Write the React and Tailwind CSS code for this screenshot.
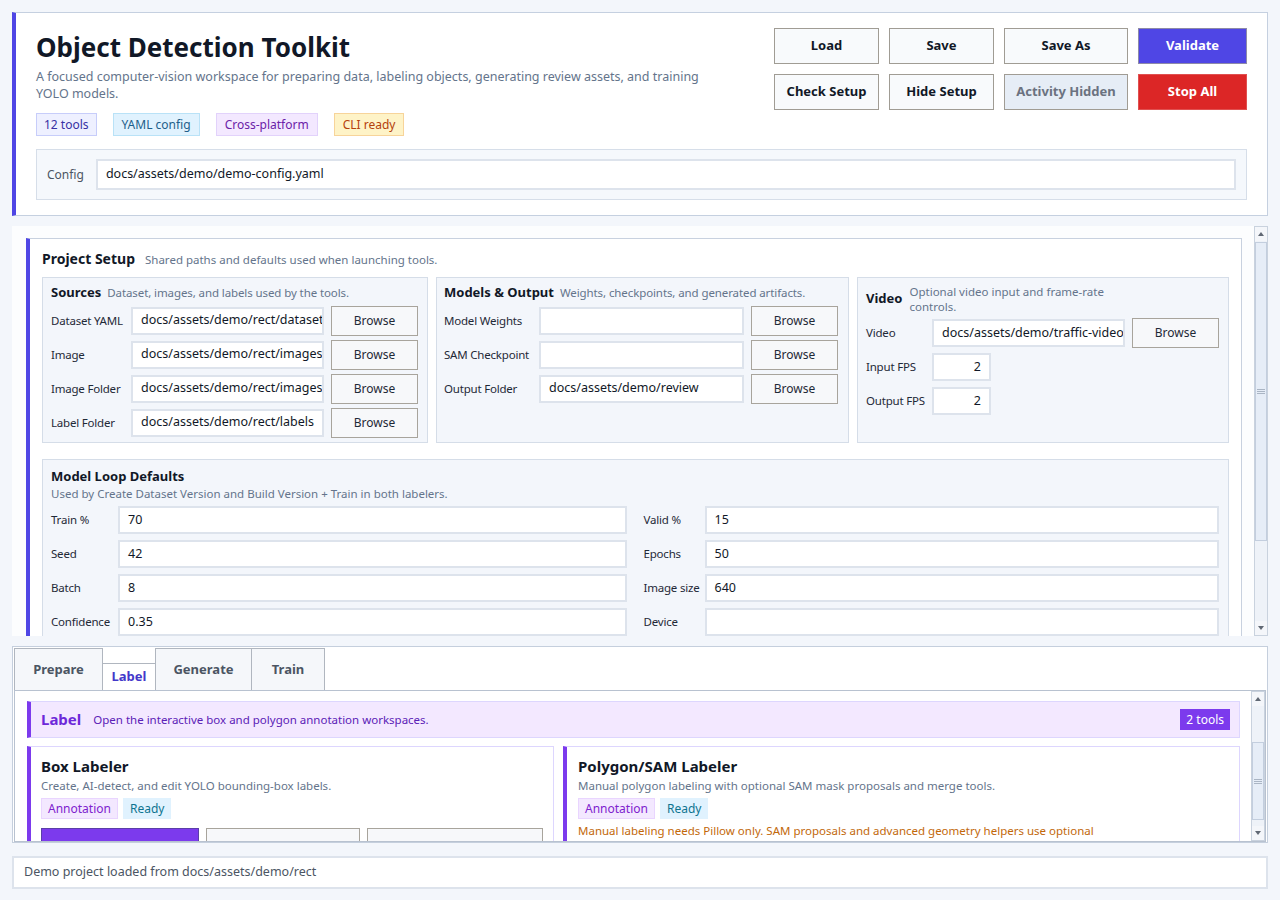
const font = { fontFamily: '"Noto Sans", "Open Sans", sans-serif' };

function Badge({ className, children }) {
  return (
    <span className={`inline-flex items-center border text-[12px] ${className}`}>
      {children}
    </span>
  );
}

function Btn({ className = "", children }) {
  return (
    <button
      type="button"
      className={`flex items-center justify-center border text-[13px] font-bold ${className}`}
    >
      {children}
    </button>
  );
}

function Field({ value = "", className = "", right = false }) {
  return (
    <div
      className={`flex h-[28px] items-center overflow-hidden whitespace-nowrap border-2 border-[#dde3ec] bg-white px-[8px] text-[12.5px] text-[#111827] ${
        right ? "justify-end" : ""
      } ${className}`}
    >
      {value}
    </div>
  );
}

function Browse() {
  return (
    <button
      type="button"
      className="flex h-[30px] w-[87px] shrink-0 items-center justify-center border border-[#a8a49c] bg-[#f7f8fa] text-[12px] text-[#1f2937]"
    >
      Browse
    </button>
  );
}

function Label({ w, children }) {
  return (
    <span className="shrink-0 whitespace-nowrap text-[11.5px] tracking-[-0.2px] text-[#1f2937]" style={{ width: w }}>
      {children}
    </span>
  );
}

function Scrollbar({ thumbTop, thumbH }) {
  return (
    <div className="flex w-[14px] shrink-0 flex-col border border-[#c9d2de] bg-[#eef2f8]">
      <div className="flex h-[14px] items-center justify-center bg-[#f4f6fa]">
        <div className="h-0 w-0 border-x-[3px] border-b-[4px] border-x-transparent border-b-[#606874]" />
      </div>
      <div className="relative flex-1">
        <div
          className="absolute left-0 right-0 flex flex-col items-center justify-center gap-[1px] border border-[#c3cede] bg-[#e6edf7]"
          style={{ top: thumbTop, height: thumbH }}
        >
          <div className="h-px w-[8px] bg-[#aab5c4]" />
          <div className="h-px w-[8px] bg-[#aab5c4]" />
          <div className="h-px w-[8px] bg-[#aab5c4]" />
        </div>
      </div>
      <div className="flex h-[14px] items-center justify-center bg-[#f4f6fa]">
        <div className="h-0 w-0 border-x-[3px] border-t-[4px] border-x-transparent border-t-[#606874]" />
      </div>
    </div>
  );
}

function LoopRow({ label, labelW, value }) {
  return (
    <div className="flex items-center">
      <Label w={labelW}>{label}</Label>
      <Field value={value} className="flex-1" />
    </div>
  );
}

export default function App() {
  return (
    <div className="flex h-[900px] flex-col bg-[#f3f6fb] p-3" style={font}>
      {/* header */}
      <header className="flex h-[204px] shrink-0 flex-col border border-l-4 border-[#c5d0e0] border-l-[#4f46e5] bg-white pl-5 pr-5 pt-[15px]">
        <div className="flex">
          <div className="flex-1">
            <h1 className="mt-[3px] text-[26px] font-bold leading-[32px] text-[#111827]">Object Detection Toolkit</h1>
            <p className="mt-[5px] w-[690px] text-[12.5px] leading-[17px] text-[#64748b]">
              A focused computer-vision workspace for preparing data, labeling objects, generating review assets, and training
              YOLO models.
            </p>
            <div className="mt-[11px] flex gap-4">
              <Badge className="h-[23px] border-[#c7cdfa] bg-[#eef0ff] px-[7px] text-[#3730a3]">12 tools</Badge>
              <Badge className="h-[23px] border-[#b9e2f7] bg-[#e0f2fe] px-[8px] text-[#1e5f8a]">YAML config</Badge>
              <Badge className="h-[23px] border-[#e2d2fb] bg-[#f3e8ff] px-[8px] text-[#6b21a8]">Cross-platform</Badge>
              <Badge className="h-[23px] border-[#f7d49a] bg-[#fef3c7] px-[8px] text-[#b4410c]">CLI ready</Badge>
            </div>
          </div>
          <div className="grid grid-cols-[105px_105px_124px_109px] grid-rows-[36px_36px] gap-[10px]">
            <Btn className="border-[#a09c94] bg-[#f8fafc] text-[#111827]">Load</Btn>
            <Btn className="border-[#a09c94] bg-[#f8fafc] text-[#111827]">Save</Btn>
            <Btn className="border-[#a09c94] bg-[#f8fafc] text-[#111827]">Save As</Btn>
            <Btn className="border-[#8d8aa8] bg-[#4f46e5] text-white">Validate</Btn>
            <Btn className="border-[#a09c94] bg-[#f8fafc] text-[#111827]">Check Setup</Btn>
            <Btn className="border-[#a09c94] bg-[#f8fafc] text-[#111827]">Hide Setup</Btn>
            <Btn className="border-[#a09c94] bg-[#e6edf6] text-[#6b7280]">Activity Hidden</Btn>
            <Btn className="border-[#e05050] bg-[#dc2626] text-white">Stop All</Btn>
          </div>
        </div>
        <div className="mt-[13px] flex h-[51px] items-center gap-[12px] border border-[#d6dee9] bg-[#f5f8fc] px-[10px]">
          <span className="text-[12px] text-[#4b5563]">Config</span>
          <div className="flex h-[31px] flex-1 items-center border-2 border-[#dde3ec] bg-white px-[8px] text-[12.5px] text-[#111827]">
            docs/assets/demo/demo-config.yaml
          </div>
        </div>
      </header>

      {/* project setup scroll area */}
      <section className="mt-[10px] flex h-[410px] shrink-0">
        <div className="flex-1 overflow-hidden bg-[#fcfdfe] pl-[14px] pr-[12px] pt-[12px]">
          <div className="border border-l-4 border-[#c8d1df] border-l-[#4f46e5] bg-white px-[12px] pb-4 pt-[9px]">
            <div className="flex items-baseline gap-[10px]">
              <span className="text-[14px] font-bold text-[#111827]">Project Setup</span>
              <span className="text-[11.5px] text-[#64748b]">Shared paths and defaults used when launching tools.</span>
            </div>
            <div className="mt-[8px] grid grid-cols-[386px_413px_372px] gap-[8px]">
              <div className="h-[166px] border border-[#d5dde8] bg-[#f3f6fb] pl-[8px] pr-[9px] pt-[5px]">
                <div className="flex items-baseline gap-[6px]">
                  <span className="text-[13px] font-bold text-[#111827]">Sources</span>
                  <span className="text-[11.5px] tracking-[-0.1px] text-[#64748b]">Dataset, images, and labels used by the tools.</span>
                </div>
                <div className="mt-[3px] flex flex-col gap-[4px]">
                  {[
                    ["Dataset YAML", "docs/assets/demo/rect/dataset.yaml"],
                    ["Image", "docs/assets/demo/rect/images"],
                    ["Image Folder", "docs/assets/demo/rect/images"],
                    ["Label Folder", "docs/assets/demo/rect/labels"],
                  ].map(([l, v]) => (
                    <div key={l} className="flex h-[30px] items-center">
                      <Label w={80}>{l}</Label>
                      <Field value={v} className="mr-[7px] w-[193px] shrink-0" />
                      <Browse />
                    </div>
                  ))}
                </div>
              </div>
              <div className="h-[166px] border border-[#d5dde8] bg-[#f3f6fb] pl-[7px] pr-[9px] pt-[5px]">
                <div className="flex items-baseline gap-[6px]">
                  <span className="text-[13px] font-bold text-[#111827]">Models &amp; Output</span>
                  <span className="text-[11.5px] tracking-[-0.1px] text-[#64748b]">Weights, checkpoints, and generated artifacts.</span>
                </div>
                <div className="mt-[3px] flex flex-col gap-[4px]">
                  {[
                    ["Model Weights", ""],
                    ["SAM Checkpoint", ""],
                    ["Output Folder", "docs/assets/demo/review"],
                  ].map(([l, v]) => (
                    <div key={l} className="flex h-[30px] items-center">
                      <Label w={95}>{l}</Label>
                      <Field value={v} className="mr-[7px] w-[205px] shrink-0" />
                      <Browse />
                    </div>
                  ))}
                </div>
              </div>
              <div className="h-[166px] border border-[#d5dde8] bg-[#f3f6fb] pl-[8px] pr-[9px] pt-[6px]">
                <div className="flex items-center gap-[7px]">
                  <span className="text-[13px] font-bold text-[#111827]">Video</span>
                  <span className="w-[220px] text-[11.5px] leading-[15px] text-[#64748b]">
                    Optional video input and frame-rate controls.
                  </span>
                </div>
                <div className="mt-[4px] flex flex-col gap-[4px]">
                  <div className="flex h-[30px] items-center">
                    <Label w={66}>Video</Label>
                    <Field value="docs/assets/demo/traffic-video.mp4" className="mr-[7px] w-[193px] shrink-0" />
                    <Browse />
                  </div>
                  {["Input FPS", "Output FPS"].map((l) => (
                    <div key={l} className="flex h-[30px] items-center">
                      <Label w={66}>{l}</Label>
                      <Field value="2" right className="w-[59px] shrink-0" />
                    </div>
                  ))}
                </div>
              </div>
            </div>

            <div className="mt-[16px] border border-[#d5dde8] bg-[#f3f6fb] pl-[8px] pr-[9px] pt-[7px] pb-3">
              <div className="text-[13px] font-bold leading-[18px] text-[#111827]">Model Loop Defaults</div>
              <div className="text-[11.5px] leading-[17px] text-[#64748b]">
                Used by Create Dataset Version and Build Version + Train in both labelers.
              </div>
              <div className="mt-[4px] grid grid-cols-2 gap-x-[17px] gap-y-[6px]">
                <LoopRow label="Train %" labelW={67} value="70" />
                <LoopRow label="Valid %" labelW={61} value="15" />
                <LoopRow label="Seed" labelW={67} value="42" />
                <LoopRow label="Epochs" labelW={61} value="50" />
                <LoopRow label="Batch" labelW={67} value="8" />
                <LoopRow label="Image size" labelW={61} value="640" />
                <LoopRow label="Confidence" labelW={67} value="0.35" />
                <LoopRow label="Device" labelW={61} value="" />
              </div>
            </div>
          </div>
        </div>
        <Scrollbar thumbTop={1} thumbH={299} />
      </section>

      {/* tabs */}
      <section className="mt-[10px] flex h-[197px] shrink-0 flex-col border border-[#c5cfdd] bg-white px-px pt-px">
        <div className="flex h-[42px] shrink-0 items-end">
          <div className="flex h-[42px] w-[89px] items-center justify-center border border-b-0 border-[#b0b6bf] bg-[#f5f7fa] text-[13px] font-bold text-[#4b5563]">
            Prepare
          </div>
          <div className="flex h-[27px] w-[52px] items-center justify-center border-t border-[#b0b6bf] bg-white text-[13px] font-bold text-[#4338ca]">
            Label
          </div>
          <div className="flex h-[42px] w-[97px] items-center justify-center border border-b-0 border-[#b0b6bf] bg-[#f5f7fa] text-[13px] font-bold text-[#4b5563]">
            Generate
          </div>
          <div className="flex h-[42px] w-[73px] items-center justify-center border border-b-0 border-l-0 border-[#b0b6bf] bg-[#f5f7fa] text-[13px] font-bold text-[#4b5563]">
            Train
          </div>
        </div>
        <div className="flex min-h-0 flex-1 border border-[#b8c2d0]">
          <div className="flex-1 overflow-hidden pl-[12px] pr-[11px] pt-[10px]">
            <div className="flex h-[37px] items-center border border-l-4 border-[#ddd6fe] border-l-[#7c3aed] bg-[#f3e8ff] pl-[10px] pr-[9px]">
              <span className="text-[15px] font-bold text-[#6d28d9]">Label</span>
              <span className="ml-[12px] text-[11.5px] text-[#5b21b6]">Open the interactive box and polygon annotation workspaces.</span>
              <span className="ml-auto flex h-[21px] items-center bg-[#7c3aed] px-[6px] text-[12px] text-white">2 tools</span>
            </div>
            <div className="mt-[8px] grid grid-cols-[527px_1fr] gap-[9px]">
              <div className="h-[110px] border border-l-4 border-[#ddd6fe] border-l-[#7c3aed] bg-white pl-[10px] pr-[10px] pt-[8px]">
                <div className="text-[15px] font-bold leading-[22px] text-[#111827]">Box Labeler</div>
                <div className="text-[11.5px] leading-[18px] text-[#64748b]">Create, AI-detect, and edit YOLO bounding-box labels.</div>
                <div className="mt-[3px] flex gap-[5px]">
                  <Badge className="h-[21px] border-[#e9d5ff] bg-[#f3e8ff] px-[6px] text-[#7e22ce]">Annotation</Badge>
                  <Badge className="h-[21px] border-[#e0f2fe] bg-[#e0f2fe] px-[6px] text-[#0e7490]">Ready</Badge>
                </div>
                <div className="mt-[9px] flex gap-[7px]">
                  <div className="h-[30px] w-[158px] border border-[#5b3fa8] bg-[#7c3aed]" />
                  <div className="h-[30px] w-[154px] border border-[#a8a49c] bg-[#f7f8fa]" />
                  <div className="h-[30px] w-[176px] border border-[#a8a49c] bg-[#f7f8fa]" />
                </div>
              </div>
              <div className="h-[110px] border border-l-4 border-[#ddd6fe] border-l-[#7c3aed] bg-white pl-[11px] pt-[8px]">
                <div className="text-[15px] font-bold leading-[22px] text-[#111827]">Polygon/SAM Labeler</div>
                <div className="text-[11.5px] leading-[18px] text-[#64748b]">
                  Manual polygon labeling with optional SAM mask proposals and merge tools.
                </div>
                <div className="mt-[3px] flex gap-[5px]">
                  <Badge className="h-[21px] border-[#e9d5ff] bg-[#f3e8ff] px-[6px] text-[#7e22ce]">Annotation</Badge>
                  <Badge className="h-[21px] border-[#e0f2fe] bg-[#e0f2fe] px-[6px] text-[#0e7490]">Ready</Badge>
                </div>
                <div className="mt-[3px] text-[11.5px] leading-[18px] text-[#c2680a]">
                  Manual labeling needs Pillow only. SAM proposals and advanced geometry helpers use optional
                </div>
              </div>
            </div>
          </div>
          <Scrollbar thumbTop={36} thumbH={78} />
        </div>
      </section>

      {/* status */}
      <footer className="mt-[13px] flex h-[33px] shrink-0 items-center border-2 border-[#dde3ec] bg-white px-[10px] text-[12.5px] text-[#4b5563]">
        Demo project loaded from docs/assets/demo/rect
      </footer>
    </div>
  );
}
